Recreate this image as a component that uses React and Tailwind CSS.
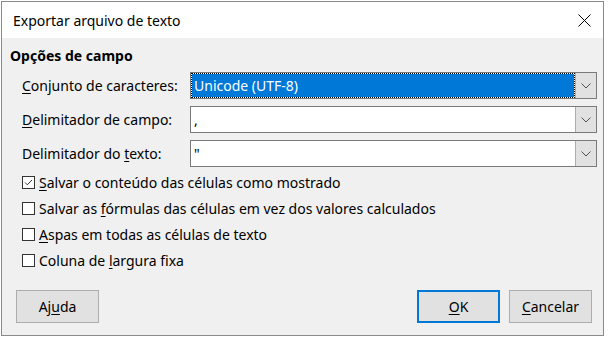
import React from "react";

const font = { fontFamily: '"Noto Sans", "Open Sans", sans-serif' };

function Chevron() {
  return (
    <svg width="10" height="6" viewBox="0 0 10 6" className="block">
      <path d="M0.5 0.5 L5 5 L9.5 0.5" fill="none" stroke="#505050" strokeWidth="1" />
    </svg>
  );
}

function Combo({ children, selected }) {
  return (
    <div className="flex h-[27px] w-[407px] border border-[#7a7a7a] bg-white">
      {selected ? (
        <div className="flex-1 bg-white">
          <div className="h-full bg-[#0078d7] bg-clip-padding border border-dotted border-black flex items-center pl-[2px] text-white">
            {children}
          </div>
        </div>
      ) : (
        <div className="flex-1 flex items-center pl-[3px] text-black">{children}</div>
      )}
      <div className="w-[21px] bg-[#e1e1e1] border-l border-[#adadad] flex items-center justify-center">
        <Chevron />
      </div>
    </div>
  );
}

function Check({ checked, children }) {
  return (
    <div className="flex items-center h-[26px]">
      <div className="w-[13px] h-[13px] border border-[#333333] bg-white flex items-center justify-center mr-[4px]">
        {checked && (
          <svg width="11" height="11" viewBox="0 0 11 11" className="block">
            <path d="M2 5.5 L4.3 7.8 L9 3" fill="none" stroke="#333333" strokeWidth="1" />
          </svg>
        )}
      </div>
      <span>{children}</span>
    </div>
  );
}

function Btn({ children, primary }) {
  return (
    <div
      className={
        "w-[83px] h-[33px] flex items-center justify-center bg-[#e1e1e1] " +
        (primary ? "border-2 border-[#0078d7]" : "border border-[#adadad]")
      }
    >
      {children}
    </div>
  );
}

export default function App() {
  return (
    <div className="w-[608px] h-[339px] bg-white overflow-hidden pt-[1px] pl-[1px] text-[14px] text-black" style={font}>
      <div className="w-[603px] h-[335px] border border-[#8a8a8a] flex flex-col bg-[#f0f0f0]">
        <div className="h-[36px] bg-white flex items-center justify-between pl-[11px] pr-[12px] shrink-0">
          <span className="text-[14px]">Exportar arquivo de texto</span>
          <svg width="13" height="13" viewBox="0 0 13 13" className="block">
            <path d="M0.5 0.5 L12.5 12.5 M12.5 0.5 L0.5 12.5" stroke="#000" strokeWidth="1" />
          </svg>
        </div>
        <div className="flex flex-col pl-[8px]">
          <div className="mt-[8px] h-[20px] leading-[20px] font-bold">Opções de campo</div>
          <div className="mt-[6px] pl-[12px] flex flex-col gap-[7px]">
            <div className="flex items-center">
              <span className="w-[168px]"><u className="underline-offset-2">C</u>onjunto de caracteres:</span>
              <Combo selected>Unicode (UTF-8)</Combo>
            </div>
            <div className="flex items-center">
              <span className="w-[168px]"><u className="underline-offset-2">D</u>elimitador de campo:</span>
              <Combo>,</Combo>
            </div>
            <div className="flex items-center">
              <span className="w-[168px]">Delimitador do <u className="underline-offset-2">t</u>exto:</span>
              <Combo>"</Combo>
            </div>
          </div>
          <div className="mt-[2px] pl-[12px] flex flex-col">
            <Check checked><u className="underline-offset-2">S</u>alvar o conteúdo das células como mostrado</Check>
            <Check>Salvar as <u className="underline-offset-2">f</u>órmulas das células em vez dos valores calculados</Check>
            <Check><u className="underline-offset-2">A</u>spas em todas as células de texto</Check>
            <Check>Coluna de <u className="underline-offset-2">l</u>argura fixa</Check>
          </div>
        </div>
        <div className="mt-[17px] flex items-center pl-[14px] pr-[11px]">
          <Btn>Aj<u className="underline-offset-2">u</u>da</Btn>
          <div className="flex-1" />
          <div className="flex gap-[9px]">
            <Btn primary><u className="underline-offset-2">O</u>K</Btn>
            <Btn><u className="underline-offset-2">C</u>ancelar</Btn>
          </div>
        </div>
      </div>
    </div>
  );
}
